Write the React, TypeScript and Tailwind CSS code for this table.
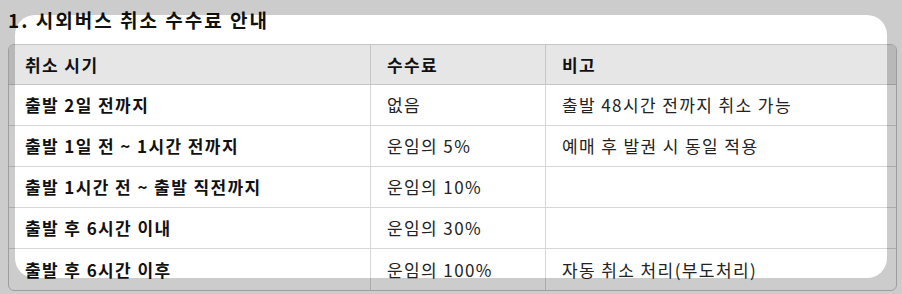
// 시외버스 취소 수수료 안내 표 — 하이라이트 오버레이 포함
const rows = [
  { when: '출발 2일 전까지', fee: '없음', note: '출발 48시간 전까지 취소 가능' },
  { when: '출발 1일 전 ~ 1시간 전까지', fee: '운임의 5%', note: '예매 후 발권 시 동일 적용' },
  { when: '출발 1시간 전 ~ 출발 직전까지', fee: '운임의 10%', note: '' },
  { when: '출발 후 6시간 이내', fee: '운임의 30%', note: '' },
  { when: '출발 후 6시간 이후', fee: '운임의 100%', note: '자동 취소 처리(부도처리)' },
];

export default function App() {
  return (
    <div
      className="relative w-[902px] h-[294px] overflow-hidden bg-white text-[#111]"
      style={{ fontFamily: '"Noto Sans CJK KR", "Noto Sans", sans-serif' }}
    >
      <div className="pl-2 pt-[6px]">
        <h3 className="text-[19px] leading-[27px] font-bold tracking-[2px]">1. 시외버스 취소 수수료 안내</h3>

        {/* Table */}
        <div className="mt-[11px] w-[889px] border border-[#c6c6c6] rounded-md overflow-hidden text-[17px] tracking-[1.4px]">
          <div className="grid grid-cols-[362px_175px_1fr] bg-[#e6e6e6] font-bold">
            <div className="h-[40px] flex items-center px-4 border-r border-b border-[#c6c6c6]">취소 시기</div>
            <div className="h-[40px] flex items-center px-4 border-r border-b border-[#c6c6c6]">수수료</div>
            <div className="h-[40px] flex items-center px-4 border-b border-[#c6c6c6]">비고</div>
          </div>
          {rows.map((r, i) => {
            const last = i === rows.length - 1;
            const rowBorder = last ? '' : 'border-b';
            return (
              <div key={r.when} className="grid grid-cols-[362px_175px_1fr]">
                <div className={`h-[41px] flex items-center px-4 font-bold border-r border-[#d6d6d6] ${rowBorder}`}>
                  {r.when}
                </div>
                <div className={`h-[41px] flex items-center px-4 text-[#222] border-r border-[#d6d6d6] ${rowBorder}`}>
                  {r.fee}
                </div>
                <div className={`h-[41px] flex items-center px-4 text-[#222] border-[#d6d6d6] ${rowBorder}`}>
                  {r.note}
                </div>
              </div>
            );
          })}
        </div>
      </div>

      {/* Highlight cutout overlay */}
      <div className="pointer-events-none absolute left-[15px] top-[15px] w-[872px] h-[263px] rounded-[20px] shadow-[0_0_0_9999px_rgba(0,0,0,0.2)]" />
    </div>
  );
}
